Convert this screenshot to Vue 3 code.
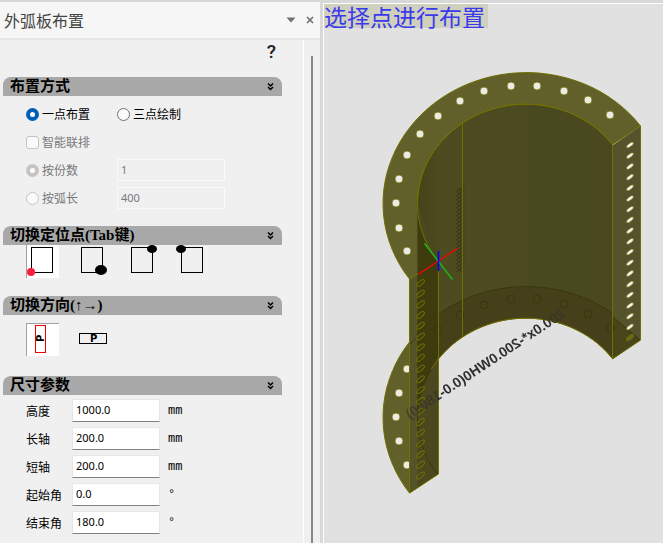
<script setup>
import { ref } from 'vue'

const mode = ref('one')
const split = ref('count')
const chain = ref(false)
const count = ref('1')
const arcLength = ref('400')
const anchor = ref(0)
const direction = ref(0)

const anchors = [
  { name: '左下', x: 5, y: 27, rx: 4, ry: 4, color: '#ff1c38' },
  { name: '右下', x: 25, y: 25, rx: 6, ry: 5, color: '#000' },
  { name: '右上', x: 26, y: 4, rx: 5, ry: 4, color: '#000' },
  { name: '左上', x: 5, y: 4, rx: 5, ry: 4, color: '#000' }
]

const params = ref([
  { id: 'height', label: '高度', value: '1000.0', unit: 'mm' },
  { id: 'major', label: '长轴', value: '200.0', unit: 'mm' },
  { id: 'minor', label: '短轴', value: '200.0', unit: 'mm' },
  { id: 'start', label: '起始角', value: '0.0', unit: '°' },
  { id: 'end', label: '结束角', value: '180.0', unit: '°' }
])

// Projected half ring: k scales the radius, drop moves it down the extrusion.
const DROP = 214
const INNER = 0.757
function arc(k, from, to, drop = 0) {
  const pts = []
  for (let i = 0; i <= 48; i++) {
    const t = Math.PI * (from + ((to - from) * i) / 48)
    const x = 525 + k * (115.5 * Math.cos(t) - 82.6 * Math.sin(t))
    const y = 202.5 + drop + k * (-76.5 * Math.cos(t) - 105 * Math.sin(t))
    pts.push(x.toFixed(1) + ',' + y.toFixed(1))
  }
  return pts.join(' ')
}
const LEFT = 0.802
const topRing = arc(1, 0, 1) + ' ' + arc(INNER, 1, 0)
const bottomRing = arc(1, 0, 1, DROP) + ' ' + arc(INNER, 1, 0, DROP)
const wall = arc(INNER, 0, LEFT) + ' ' + arc(INNER, LEFT, 0, DROP)
const shade = arc(INNER, LEFT, 1) + ' 438,357 ' + arc(INNER, 0.64, LEFT, DROP)
const innerTop = arc(INNER, 0, 1)
const outerBottom = arc(1, 0, 1, DROP)
const leftFace = '409.5,279 438,260 438,474 409.5,493'
const rightFace = '612.5,145.5 640.5,126 640.5,340 612.5,359'

const topHoles = [
  [407, 251], [399, 228], [396, 203], [399, 179], [407, 155], [420, 134], [438, 116],
  [460, 101], [484, 91], [511, 86], [537, 86], [564, 91], [588, 100], [610, 115]
]
const openHoles = [[407, 369], [399, 393], [396, 417], [399, 441], [407, 465]]
const hiddenHoles = [[438, 330], [460, 315], [484, 305], [511, 299], [537, 299], [564, 304], [588, 314], [610, 328]]
const slots = Array.from({ length: 19 }, (_, i) => 145 + i * 10.7)
const ticks = Array.from({ length: 21 }, (_, i) => 190 + i * 4)
</script>

<template>
  <div class="app">
    <aside class="panel">
      <header class="title">
        <h1>外弧板布置</h1>
        <button type="button" class="tool" aria-label="菜单">
          <svg width="10" height="6" viewBox="0 0 10 6"><path d="M0.500 0.500H9.500L5 5.500Z" fill="#707070" /></svg>
        </button>
        <button type="button" class="tool" aria-label="关闭">
          <svg width="8" height="8" viewBox="0 0 8 8"><path d="M1 1L7 7M7 1L1 7" stroke="#707070" stroke-width="1.700" /></svg>
        </button>
      </header>
      <div class="body">
        <div class="form">
          <div class="help"><button type="button">?</button></div>

          <section class="mode">
            <h2>布置方式<svg class="fold" viewBox="0 0 7 8"><path d="M1 0.500L3.500 3L6 0.500M1 4L3.500 6.500L6 4" /></svg></h2>
            <div class="options">
              <div class="row">
                <label class="choice"><input v-model="mode" type="radio" name="mode" value="one" />一点布置</label>
                <label class="choice"><input v-model="mode" type="radio" name="mode" value="three" />三点绘制</label>
              </div>
              <div class="row off">
                <label class="choice"><input v-model="chain" type="checkbox" disabled />智能联排</label>
              </div>
              <div class="row off">
                <label class="choice"><input v-model="split" type="radio" name="split" value="count" disabled />按份数</label>
                <input v-model="count" class="field" type="text" aria-label="份数" disabled />
              </div>
              <div class="row off">
                <label class="choice"><input v-model="split" type="radio" name="split" value="arc" disabled />按弧长</label>
                <input v-model="arcLength" class="field" type="text" aria-label="弧长" disabled />
              </div>
            </div>
          </section>

          <section class="anchor">
            <h2>切换定位点(Tab键)<svg class="fold" viewBox="0 0 7 8"><path d="M1 0.500L3.500 3L6 0.500M1 4L3.500 6.500L6 4" /></svg></h2>
            <div class="icons">
              <button
                v-for="(a, i) in anchors" :key="a.name" type="button" :aria-label="a.name"
                :class="{ on: anchor === i }" @click="anchor = i"
              >
                <svg width="33" height="33" viewBox="0 0 33 33">
                  <rect x="5.500" y="2.500" width="21" height="25" fill="none" stroke="#000" />
                  <ellipse :cx="a.x" :cy="a.y" :rx="a.rx" :ry="a.ry" :fill="a.color" />
                </svg>
              </button>
            </div>
          </section>

          <section class="direction">
            <h2>切换方向(↑→)<svg class="fold" viewBox="0 0 7 8"><path d="M1 0.500L3.500 3L6 0.500M1 4L3.500 6.500L6 4" /></svg></h2>
            <div class="icons">
              <button type="button" :class="{ on: direction === 0 }" @click="direction = 0">
                <svg width="33" height="33" viewBox="0 0 33 33">
                  <rect x="9.500" y="2.500" width="10" height="27" fill="none" stroke="#e00" />
                  <text class="glyph" transform="translate(18 19) rotate(-90)">P</text>
                </svg>
              </button>
              <button type="button" :class="{ on: direction === 1 }" @click="direction = 1">
                <svg width="33" height="33" viewBox="0 0 33 33">
                  <rect x="3.500" y="10.500" width="27" height="10" fill="none" stroke="#000" />
                  <text class="glyph" x="14" y="19">P</text>
                </svg>
              </button>
            </div>
          </section>

          <section class="size">
            <h2>尺寸参数<svg class="fold" viewBox="0 0 7 8"><path d="M1 0.500L3.500 3L6 0.500M1 4L3.500 6.500L6 4" /></svg></h2>
            <div class="params">
              <template v-for="p in params" :key="p.id">
                <label :for="p.id">{{ p.label }}</label>
                <input :id="p.id" v-model="p.value" type="text" />
                <span>{{ p.unit }}</span>
              </template>
            </div>
          </section>
        </div>
        <div class="scroll"><div class="thumb"></div></div>
      </div>
    </aside>

    <main class="view">
      <svg class="model" width="339" height="539" viewBox="324 4 339 539">
        <defs>
          <linearGradient id="wallFill">
            <stop offset="0" stop-color="#46431a" />
            <stop offset="0.120" stop-color="#4d4b20" />
            <stop offset="0.550" stop-color="#4b4a20" />
            <stop offset="0.570" stop-color="#494920" />
            <stop offset="1" stop-color="#49481f" />
          </linearGradient>
          <clipPath id="wallClip"><polygon :points="wall" /></clipPath>
          <mask id="bodyMask" maskUnits="userSpaceOnUse" x="324" y="4" width="339" height="539">
            <rect x="324" y="4" width="339" height="539" fill="#fff" />
            <g fill="#9a9a9a">
              <polygon :points="bottomRing" />
              <polygon :points="wall" />
              <polygon :points="leftFace" />
            </g>
          </mask>
        </defs>

        <polygon :points="bottomRing" fill="#62602a" stroke="#706f00" />
        <circle v-for="(h, i) in openHoles" :key="'o' + i" class="hole" :cx="h[0]" :cy="h[1]" r="4" />
        <polygon :points="leftFace" fill="#4e4b20" />
        <polygon :points="rightFace" fill="#54532b" />
        <polygon :points="wall" fill="url(#wallFill)" />
        <polygon :points="bottomRing" fill="#45401a" clip-path="url(#wallClip)" />
        <polygon points="409.5,279 417.5,274 417.5,487 409.5,493" fill="#55532a" />
        <polygon points="612,316 640,340 612,359" fill="#48461a" />
        <polygon :points="topRing" fill="#62602a" stroke="#706f00" />
        <polygon points="417.5,202 438,260 438,474 417.5,487" fill="#4b4820" />
        <polygon :points="shade" fill="#3e3b0e" />

        <g fill="none" stroke="#39370a">
          <polyline :points="outerBottom" clip-path="url(#wallClip)" />
          <path d="M612 316L640 340M410 344L417 337" />
          <polyline :points="arc(INNER, 0.64, 1, DROP)" />
          <circle v-for="(h, i) in hiddenHoles" :key="'h' + i" :cx="h[0]" :cy="h[1]" r="4" />
          <path d="M417.500 425V400" />
        </g>
        <g class="ticks"><path v-for="y in ticks" :key="y" :d="`M456 ${y + 2}l5-4M457 ${y - 2}l4 4M459 ${y + 1}l6-5`" /></g>
        <g fill="none" stroke="#706f00">
          <polyline :points="innerTop" />
          <polyline :points="arc(INNER, 0, 0.64, DROP)" />
          <path d="M462.500 123V337M438.500 261V474M409.500 279V493M612.500 145V359M640.500 126V340M612.500 359L640.500 340M409.500 493L438.500 474M409.500 279L418 274" />
        </g>
        <circle v-for="(h, i) in topHoles" :key="'t' + i" class="hole" :cx="h[0]" :cy="h[1]" r="4" />
        <g v-for="(y, i) in slots" :key="'s' + i">
          <ellipse
            :class="i === 18 ? 'slot dim' : 'slot open'" rx="4.200" ry="1.700"
            :transform="`translate(630 ${y}) rotate(-38)`"
          />
          <ellipse class="slot" rx="4.800" ry="1.900" :transform="`translate(420.500 ${y + 138}) rotate(-40)`" />
        </g>
        <g mask="url(#bodyMask)">
          <text class="caption" transform="translate(566 316) rotate(-33.500) scale(-1 1)">200.0x*-200.0WH0(0.0-180.0)</text>
        </g>
        <path d="M418 274.500L458 248" stroke="#f00" stroke-width="1.200" />
        <path d="M424.500 243.500L452.500 279.500" stroke="#1db81d" stroke-width="1.400" />
        <path d="M438.500 251V271" stroke="#00f" stroke-width="1.600" />
      </svg>
      <p class="prompt">选择点进行布置</p>
    </main>
  </div>
</template>

<style>
body {
  margin: 0;
}
</style>

<style scoped>
.app {
  display: flex;
  height: 100vh;
  box-sizing: border-box;
  border-top: 2px solid #d5dad8;
  background: #d8d8d8;
  font-family: "Noto Sans", "Noto Sans CJK SC", sans-serif;
  font-size: 12px;
  color: #000;
}
button {
  padding: 0;
  border: 0;
  background: none;
}
h1,
h2,
p {
  margin: 0;
}
.panel {
  width: 320px;
  flex: none;
  display: flex;
  flex-direction: column;
  background: #f0f0f0;
}
.title {
  display: flex;
  align-items: center;
  height: 36px;
  padding: 0 6px 0 4px;
  background: #f6f6f6;
  border-bottom: 2px solid #e5e5e5;
}
.title h1 {
  flex: 1;
  font: 400 16px/24px "Noto Sans CJK SC", sans-serif;
  color: #444;
}
.tool {
  display: flex;
  margin-left: 10px;
}
.body {
  flex: 1;
  display: flex;
  min-height: 0;
}
.form {
  flex: 1;
  padding: 0 21px 0 3px;
  border-right: 1px solid #fff;
}
.scroll {
  width: 16px;
  box-sizing: border-box;
  padding-top: 16px;
}
.thumb {
  width: 2px;
  height: 100%;
  margin-left: 7px;
  background: #868686;
}
.help {
  display: flex;
  justify-content: flex-end;
  height: 37px;
  padding-right: 6px;
}
.help button {
  height: 24px;
  font: 500 19px/24px "Roboto", sans-serif;
  color: #222;
}
h2 {
  display: flex;
  align-items: center;
  justify-content: space-between;
  height: 19px;
  padding: 0 8px 0 7px;
  box-sizing: border-box;
  border-radius: 8px 8px 0 0;
  background: #a8a8a8;
  font: 700 15px/19px "Liberation Serif", "Noto Sans CJK SC", serif;
}
.fold {
  width: 7px;
  height: 8px;
  fill: none;
  stroke: #000;
  stroke-width: 1.5;
}
.mode {
  height: 149px;
}
.anchor {
  height: 70px;
}
.direction {
  height: 80px;
}
.options {
  padding: 4px 0 0 23px;
}
.row {
  display: flex;
  align-items: center;
  height: 28px;
}
.choice {
  display: flex;
  align-items: center;
  gap: 3px;
  width: 91px;
  font: 400 12px/16px "Noto Sans CJK SC", sans-serif;
}
.choice input {
  appearance: none;
  width: 13px;
  height: 13px;
  margin: 0;
  box-sizing: border-box;
  border: 1px solid #707070;
  border-radius: 50%;
  background: #fafafa;
}
.choice input:checked {
  border: 4px solid #0060b8;
  background: #fff;
}
.off {
  color: #787878;
}
.off .choice input {
  border-color: #c4c4c4;
}
.off .choice input[type="checkbox"] {
  border-radius: 3px;
}
.field {
  width: 108px;
  height: 22px;
  box-sizing: border-box;
  padding: 0 3px 2px;
  border: 1px solid #fafafa;
  background: #f0f0f0;
  font: 400 11px/16px "Noto Sans", sans-serif;
  color: #787878;
}
.icons {
  display: flex;
  gap: 17px;
  padding-left: 23px;
}
.icons button {
  display: flex;
  width: 33px;
  height: 33px;
}
.icons .on {
  background: #fff;
  box-shadow: inset 1px 0 #a0a0a0;
}
.direction .icons {
  padding-top: 8px;
}
.direction .on {
  box-shadow: inset 1px 1px #a0a0a0;
}
.glyph {
  font: 700 10px "DejaVu Sans", sans-serif;
}
.params {
  display: grid;
  grid-template-columns: 46px 88px auto;
  align-items: center;
  row-gap: 5px;
  padding: 4px 0 0 23px;
}
.params label {
  font: 400 12px/16px "Noto Sans CJK SC", sans-serif;
}
.params input {
  height: 23px;
  box-sizing: border-box;
  padding: 0 3px 2px;
  border: 1px solid #e6e6e6;
  border-bottom-color: #808080;
  background: #fff;
  font: 400 11px/16px "Noto Sans", sans-serif;
}
.params span {
  padding-left: 8px;
  font: 400 12px/16px "Liberation Mono", monospace;
}
.view {
  position: relative;
  flex: 1;
  min-width: 0;
  margin: 1px 0 0 3px;
  border: solid #fff;
  border-width: 1px 0 0 1px;
  background: #e1e1e1;
}
.model {
  display: block;
}
.prompt {
  position: absolute;
  top: 0;
  left: 0;
  padding: 0 3px 0 0;
  background: #d0d0be;
  font: 400 23px/24px "Noto Sans CJK SC", sans-serif;
  color: #3a3aec;
}
.hole {
  fill: #ebebe6;
  stroke: #706f00;
  stroke-width: 0.8;
}
.slot {
  fill: none;
  stroke: #706f00;
  stroke-width: 1;
}
.open {
  fill: #f4f4f0;
  stroke-width: 0.6;
}
.dim {
  fill: #6a6820;
}
.ticks {
  fill: none;
  stroke: #3a3916;
  stroke-width: 1;
}
.caption {
  font: 700 14px "Liberation Sans", sans-serif;
  fill: #303030;
}
</style>
